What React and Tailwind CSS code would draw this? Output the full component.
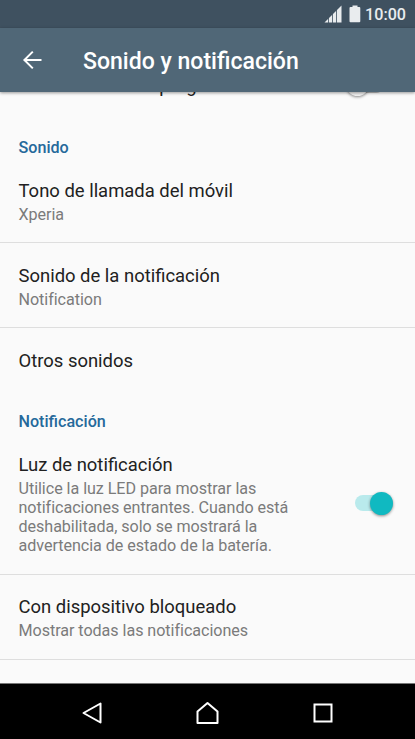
import React, { useState } from 'react';

const StatusBar = () => (
    <div className="h-7 shrink-0 bg-[#3f5160] flex items-center justify-end pr-[9px] text-[#e9ecee]">
        {/* Signal strength */}
        <svg width="18" height="18" viewBox="0 0 18 18" className="mr-[7px]">
            <path d="M0.5 17.500 L17.500 0.500 V17.500 Z" fill="currentColor" />
            <path d="M4.500 9V18M8.500 5V18M12.500 2V18" stroke="#3f5160" strokeWidth="1" opacity="0.8" />
        </svg>
        {/* Battery */}
        <svg width="12" height="18" viewBox="0 0 12 18" className="mr-[4px]">
            <path d="M3.500 0.500h5v1.500h1.800q1 0 1 1v13.300q0 1-1 1H1.500q-1 0-1-1V3q0-1 1-1h2z" fill="currentColor" />
        </svg>
        <span className="pt-px text-[16.14px] leading-[19px] font-medium">10:00</span>
    </div>
);

const Header = ({ title }) => (
    <div className="relative z-10 h-16 shrink-0 bg-[#506777] flex items-center pl-[22px] shadow-[0_1px_3px_rgba(0,0,0,0.4)]">
        <button className="text-white">
            <svg width="20" height="20" viewBox="0 0 20 20" fill="none" stroke="currentColor" strokeWidth="2">
                <path d="M19.500 10H2.500M10.800 1.600L2.400 10l8.400 8.400" />
            </svg>
        </button>
        <h1 className="ml-[41px] pt-[4px] text-[23.06px] leading-7 font-medium text-white">{title}</h1>
    </div>
);

const Switch = ({ checked, onChange }) => (
    <button role="switch" aria-checked={checked} onClick={onChange} className="w-[38px] h-6 mb-[2px] shrink-0 flex items-center">
        <span className={`flex items-center w-full h-4 rounded-full ${checked ? 'justify-end bg-[#b9eaec]' : 'justify-start bg-[#bdbdbd]'}`}>
            <span className={`w-[23px] h-[23px] shrink-0 rounded-full shadow-[0_1px_3px_rgba(0,0,0,0.45)] ${checked ? 'bg-[#10b9c1]' : 'bg-[#f1f1f1]'}`} />
        </span>
    </button>
);

const SectionTitle = ({ children }) => (
    <h2 className="px-[18.500px] text-[16.14px] leading-[19px] font-medium text-[#25699b]">{children}</h2>
);

const Row = ({ title, summary, children, className = '' }) => (
    <div className={`flex items-center justify-between pl-[18.500px] pr-[22px] ${className}`}>
        <div>
            <p className="text-[18.44px] leading-[22px] text-[#212121]">{title}</p>
            {summary && <p className="mt-[3px] w-[280px] text-[16.14px] leading-[19px] tracking-[-0.05px] text-[#7b7b7b]">{summary}</p>}
        </div>
        {children}
    </div>
);

const NavBar = () => (
    <div className="h-14 shrink-0 bg-black border-t border-[#777] flex items-center justify-between pl-[81px] pr-[82px] pt-[3px]">
        <svg width="22" height="24" viewBox="0 0 22 24" fill="none" stroke="white" strokeWidth="2">
            <path d="M19.500 2.500v19L2.500 12z" strokeLinejoin="round" />
        </svg>
        <svg width="24" height="24" viewBox="0 0 24 24" fill="none" stroke="white" strokeWidth="2">
            <path d="M1.500 22V10.500L11.500 2l10 8.500V22z" strokeLinejoin="round" />
        </svg>
        <svg width="20" height="20" viewBox="0 0 20 20" fill="none" stroke="white" strokeWidth="2">
            <rect x="1.500" y="1.500" width="17" height="17" />
        </svg>
    </div>
);

const App = () => {
    const [progressive, setProgressive] = useState(false);
    const [ledEnabled, setLedEnabled] = useState(true);

    return (
        <div className="w-[415px] h-[739px] flex flex-col overflow-hidden bg-[#fafafa] font-[Roboto,sans-serif]">
            <StatusBar />
            <Header title="Sonido y notificación" />

            {/* Scrolled list, the first row is mostly under the header */}
            <div className="flex-1 min-h-0 overflow-hidden">
                <Row title="Tono de llamada progresivo" className="-mt-[39px] h-[65px] pr-[31px]">
                    <Switch checked={progressive} onChange={() => setProgressive(!progressive)} />
                </Row>

                <div className="pt-5">
                    <SectionTitle>Sonido</SectionTitle>
                </div>
                <Row title="Tono de llamada del móvil" summary="Xperia" className="h-[86px] pt-[4px] border-b border-[#dedede]" />
                <Row title="Sonido de la notificación" summary="Notification" className="h-[85px] pt-[3px] border-b border-[#dedede]" />
                <Row title="Otros sonidos" className="h-16 pt-[2px]" />

                <div className="pt-5">
                    <SectionTitle>Notificación</SectionTitle>
                </div>
                <Row
                    title="Luz de notificación"
                    summary="Utilice la luz LED para mostrar las notificaciones entrantes. Cuando está deshabilitada, solo se mostrará la advertencia de estado de la batería."
                    className="h-[144px] pt-[3px] border-b border-[#dedede]"
                >
                    <Switch checked={ledEnabled} onChange={() => setLedEnabled(!ledEnabled)} />
                </Row>
                <Row title="Con dispositivo bloqueado" summary="Mostrar todas las notificaciones" className="h-[85px] pt-px border-b border-[#dedede]" />
            </div>

            <NavBar />
        </div>
    );
};

export default App;
